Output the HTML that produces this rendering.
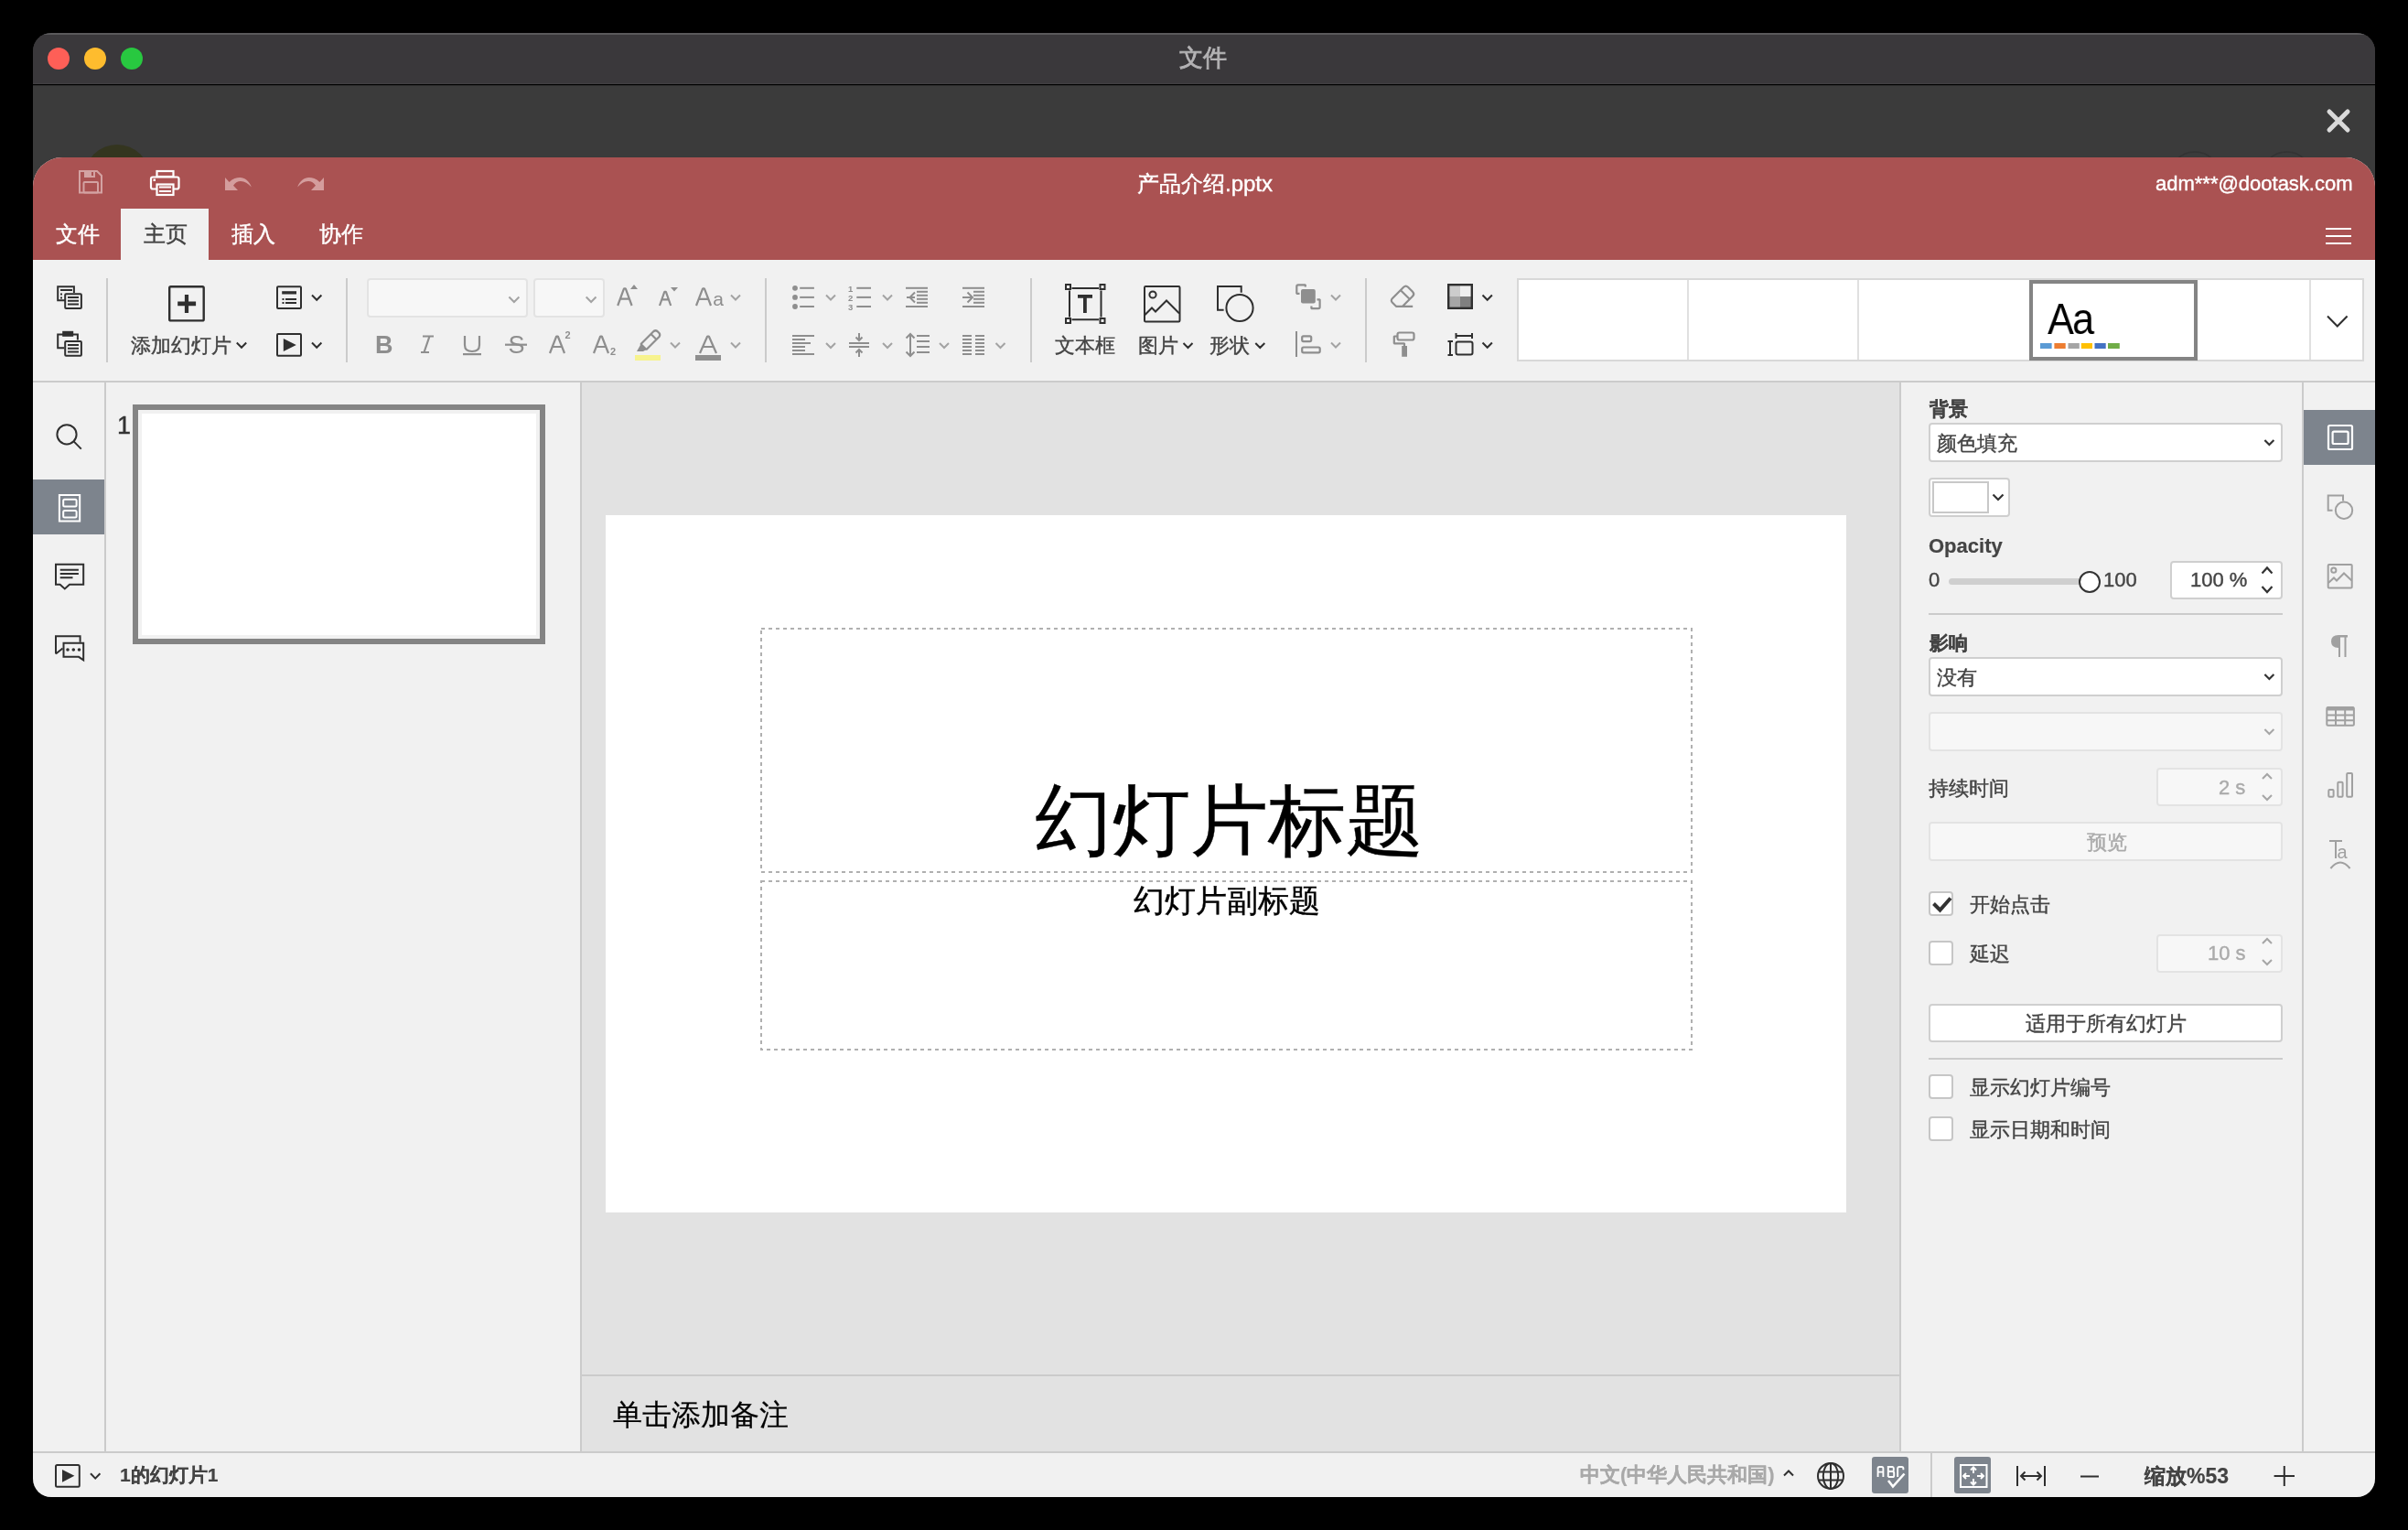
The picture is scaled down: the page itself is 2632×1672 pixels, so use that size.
<!DOCTYPE html>
<html><head><meta charset="utf-8">
<style>
*{box-sizing:border-box;margin:0;padding:0}
html,body{width:2632px;height:1672px;overflow:hidden;background:#000}
body{position:relative;font-family:"Liberation Sans",sans-serif;color:#444}
.a{position:absolute}
.t{position:absolute;line-height:1;white-space:nowrap;-webkit-text-stroke:0.4px;will-change:transform}
#win{position:absolute;left:0;top:0;width:2632px;height:1672px;clip-path:inset(36px 36px 36px 36px round 20px);background:#3b3b3b}
.cb{position:absolute;background:#fff;border:2px solid #cfcfcf;border-radius:4px}
.dis{background:#f7f7f7;border-color:#e3e3e3}
.chk{position:absolute;width:27px;height:27px;background:#fff;border:2px solid #c6c6c6;border-radius:4px}
</style></head><body>
<div id="win">
  <!-- mac title bar -->
  <div class="a" style="left:36px;top:36px;width:2560px;height:56px;background:#3a383b;border-top:2px solid #5a595b"></div>
  <div class="a" style="left:36px;top:91px;width:2560px;height:1px;background:#424043"></div><div class="a" style="left:36px;top:92px;width:2560px;height:1px;background:#000"></div><div class="a" style="left:36px;top:93px;width:2560px;height:1px;background:#2e2e2e"></div>
  <div class="a" style="left:52px;top:52px;width:24px;height:24px;border-radius:50%;background:#fe5f57"></div>
  <div class="a" style="left:92px;top:52px;width:24px;height:24px;border-radius:50%;background:#febc2e"></div>
  <div class="a" style="left:132px;top:52px;width:24px;height:24px;border-radius:50%;background:#28c840"></div>
  <div class="t" style="left:1289px;top:50px;font-size:26px;color:#b4b3b5;-webkit-text-stroke:0.9px">文件</div>
  <!-- dark strip -->
  <div class="a" style="left:92px;top:158px;width:72px;height:72px;border-radius:50%;background:#34351f"></div>

  <svg class="a" style="left:0;top:0" width="2632" height="1672"><g fill="none" stroke="#333" stroke-width="1.5"><circle cx="2399" cy="194" r="28"/><circle cx="2499.5" cy="194" r="28"/></g></svg>
  <!-- app -->
  <div class="a" style="left:36px;top:172px;width:2560px;height:1464px;background:#f1f1f1;border-radius:32px 32px 0 0;overflow:hidden">
    <div class="a" style="left:0;top:0;width:2560px;height:112px;background:#aa5252"></div>
  </div>
  <!-- tabs -->
  <div class="a" style="left:132px;top:228px;width:96px;height:56px;background:#f1f1f1"></div>
  <div class="t" style="left:61px;top:244px;font-size:24px;color:#fff">文件</div>
  <div class="t" style="left:157px;top:244px;font-size:24px;color:#444">主页</div>
  <div class="t" style="left:253px;top:244px;font-size:24px;color:#fff">插入</div>
  <div class="t" style="left:349px;top:244px;font-size:24px;color:#fff">协作</div>
  <div class="t" style="left:1243px;top:189px;font-size:24px;color:#fff">产品介绍.pptx</div>
  <div class="t" style="left:2356px;top:190px;font-size:22px;color:#fff">adm***@dootask.com</div>

  <!-- toolbar border -->
  <div class="a" style="left:36px;top:416px;width:2560px;height:2px;background:#cbcbcb"></div>
  <!-- separators -->
  <div class="a" style="left:116px;top:304px;width:2px;height:92px;background:#cbcbcb"></div>
  <div class="a" style="left:378px;top:304px;width:2px;height:92px;background:#cbcbcb"></div>
  <div class="a" style="left:836px;top:304px;width:2px;height:92px;background:#cbcbcb"></div>
  <div class="a" style="left:1126px;top:304px;width:2px;height:92px;background:#cbcbcb"></div>
  <div class="a" style="left:1492px;top:304px;width:2px;height:92px;background:#cbcbcb"></div>
  <!-- combos -->
  <div class="cb dis" style="left:401px;top:304px;width:176px;height:43px"></div>
  <div class="cb dis" style="left:583px;top:304px;width:78px;height:43px"></div>
  <!-- labels -->
  <div class="t" style="left:143px;top:367px;font-size:22px">添加幻灯片</div>
  <div class="t" style="left:1153px;top:367px;font-size:22px">文本框</div>
  <div class="t" style="left:1244px;top:367px;font-size:22px">图片</div>
  <div class="t" style="left:1322px;top:367px;font-size:22px">形状</div>
  <!-- theme gallery -->
  <div class="a" style="left:1658px;top:304px;width:926px;height:91px;background:#fff;border:2px solid #d8d8d8"></div>
  <div class="a" style="left:1844px;top:306px;width:2px;height:87px;background:#e0e0e0"></div>
  <div class="a" style="left:2030px;top:306px;width:2px;height:87px;background:#e0e0e0"></div>
  <div class="a" style="left:2524px;top:306px;width:2px;height:87px;background:#e0e0e0"></div>
  <div class="a" style="left:2218px;top:306px;width:184px;height:88px;border:4px solid #848484;background:#fff"></div>
  <div class="t" style="left:2238px;top:325px;font-size:48px;color:#000;letter-spacing:-2px;-webkit-text-stroke:0;transform:scaleX(0.9);transform-origin:0 0">Aa</div>

  <!-- left sidebar -->
  <div class="a" style="left:114px;top:418px;width:2px;height:1170px;background:#cbcbcb"></div>
  <div class="a" style="left:36px;top:524px;width:78px;height:60px;background:#7d848d"></div>
  <!-- thumbnails panel -->
  <div class="a" style="left:634px;top:418px;width:2px;height:1170px;background:#cbcbcb"></div>
  <div class="t" style="left:128px;top:452px;font-size:27px;color:#333">1</div>
  <div class="a" style="left:145px;top:442px;width:451px;height:262px;border:6px solid #848484;background:#f1f1f1;padding:4px"><div style="width:100%;height:100%;background:#fff"></div></div>
  <!-- canvas -->
  <div class="a" style="left:636px;top:418px;width:1440px;height:1085px;background:#e2e2e2"></div>
  <div class="a" style="left:662px;top:563px;width:1356px;height:762px;background:#fff"></div>
  <svg class="a" style="left:0;top:0" width="2632" height="1672"><g fill="none" stroke="#b0b0b0" stroke-width="2" stroke-dasharray="4 4"><rect x="832" y="687" width="1017" height="266"/><rect x="832" y="963" width="1017" height="184"/></g></svg>
  
  <div class="t" style="left:1131px;top:854px;font-size:85px;color:#000">幻灯片标题</div>
  <div class="t" style="left:1239px;top:967px;font-size:34px;color:#000">幻灯片副标题</div>
  <!-- notes -->
  <div class="a" style="left:636px;top:1502px;width:1440px;height:2px;background:#cbcbcb"></div>
  <div class="a" style="left:636px;top:1504px;width:1440px;height:84px;background:#e2e2e2"></div>
  <div class="t" style="left:670px;top:1530px;font-size:32px;color:#000;-webkit-text-stroke:0.2px">单击添加备注</div>
  <!-- right panel -->
  <div class="a" style="left:2076px;top:418px;width:2px;height:1170px;background:#cbcbcb"></div>
  <div class="a" style="left:2516px;top:418px;width:2px;height:1170px;background:#cbcbcb"></div>
  <div class="a" style="left:2518px;top:448px;width:78px;height:60px;background:#7d848d"></div>

  <!-- status bar -->
  <div class="a" style="left:36px;top:1586px;width:2560px;height:2px;background:#cbcbcb"></div>

  <!-- right panel widgets -->
  <div class="t" style="left:2109px;top:436px;font-size:21px;font-weight:bold;color:#444;-webkit-text-stroke:0.25px">背景</div>
  <div class="cb" style="left:2108px;top:462px;width:387px;height:43px"></div>
  <div class="t" style="left:2117px;top:474px;font-size:22px;color:#444">颜色填充</div>
  <div class="cb" style="left:2108px;top:522px;width:89px;height:43px"></div>
  <div class="a" style="left:2112px;top:526px;width:62px;height:35px;border:2px solid #c8c8c8;background:#fff"></div>
  <div class="t" style="left:2108px;top:586px;font-size:22px;font-weight:bold;color:#444;-webkit-text-stroke:0.2px">Opacity</div>
  <div class="t" style="left:2108px;top:623px;font-size:22px;color:#444">0</div>
  <div class="a" style="left:2130px;top:632px;width:154px;height:7px;border-radius:4px;background:#cfcfcf"></div>
  <div class="a" style="left:2272px;top:624px;width:24px;height:24px;border-radius:50%;background:#fff;border:2px solid #333"></div>
  <div class="t" style="left:2299px;top:623px;font-size:22px;color:#444">100</div>
  <div class="cb" style="left:2372px;top:613px;width:123px;height:42px"></div>
  <div class="t" style="left:2394px;top:623px;font-size:22px;color:#444">100 %</div>
  <div class="a" style="left:2108px;top:670px;width:387px;height:2px;background:#cbcbcb"></div>
  <div class="t" style="left:2109px;top:692px;font-size:21px;font-weight:bold;color:#444;-webkit-text-stroke:0.25px">影响</div>
  <div class="cb" style="left:2108px;top:718px;width:387px;height:43px"></div>
  <div class="t" style="left:2117px;top:730px;font-size:22px;color:#444">没有</div>
  <div class="cb dis" style="left:2108px;top:778px;width:387px;height:43px"></div>
  <div class="t" style="left:2108px;top:851px;font-size:22px;color:#444">持续时间</div>
  <div class="cb dis" style="left:2357px;top:839px;width:138px;height:42px"></div>
  <div class="t" style="left:2425px;top:850px;font-size:22px;color:#aaa">2 s</div>
  <div class="cb dis" style="left:2108px;top:898px;width:387px;height:43px"></div>
  <div class="t" style="left:2281px;top:910px;font-size:22px;color:#aaa">预览</div>
  <div class="chk" style="left:2108px;top:974px"></div>
  <div class="t" style="left:2153px;top:978px;font-size:22px;color:#444">开始点击</div>
  <div class="chk" style="left:2108px;top:1028px"></div>
  <div class="t" style="left:2153px;top:1032px;font-size:22px;color:#444">延迟</div>
  <div class="cb dis" style="left:2357px;top:1021px;width:138px;height:42px"></div>
  <div class="t" style="left:2413px;top:1031px;font-size:22px;color:#aaa">10 s</div>
  <div class="cb" style="left:2108px;top:1097px;width:387px;height:42px"></div>
  <div class="t" style="left:2214px;top:1108px;font-size:22px;color:#444">适用于所有幻灯片</div>
  <div class="a" style="left:2108px;top:1156px;width:387px;height:2px;background:#cbcbcb"></div>
  <div class="chk" style="left:2108px;top:1174px"></div>
  <div class="t" style="left:2153px;top:1178px;font-size:22px;color:#444">显示幻灯片编号</div>
  <div class="chk" style="left:2108px;top:1220px"></div>
  <div class="t" style="left:2153px;top:1224px;font-size:22px;color:#444">显示日期和时间</div>
  <!-- status texts -->
  <div class="t" style="left:131px;top:1601px;font-size:21px;font-weight:bold;color:#444;-webkit-text-stroke:0.2px">1的幻灯片1</div>
  <div class="t" style="left:1727px;top:1601px;font-size:22px;font-weight:bold;color:#a9a9a9;-webkit-text-stroke:0.2px">中文(中华人民共和国)</div>
  <div class="a" style="left:2110px;top:1588px;width:2px;height:48px;background:#cbcbcb"></div>
  <div class="t" style="left:2344px;top:1602px;font-size:23px;font-weight:bold;color:#444;-webkit-text-stroke:0.2px">缩放%53</div>
  <svg class="a" style="left:0;top:0" width="2632" height="1672" viewBox="0 0 2632 1672" fill="none" stroke-linecap="butt">
<!-- close X -->
<path d="M2546,122 L2566,142 M2566,122 L2546,142" stroke="#dadada" stroke-width="5" stroke-linecap="round"/>
<!-- header: save -->
<g stroke="#d3a2a2" stroke-width="2" fill="none">
<path d="M87,187 H106 L111,192 V210.5 H87 Z"/>
<rect x="91.5" y="199" width="15.5" height="11.5" rx="1"/>
</g>
<rect x="92" y="187" width="12" height="7" fill="#d3a2a2"/>
<rect x="100" y="188" width="2" height="4" fill="#aa5252"/>
<!-- print -->
<g stroke="#fff" stroke-width="2.2" fill="none">
<rect x="171.5" y="187" width="18" height="6"/>
<rect x="165" y="193.5" width="30.5" height="13" rx="2"/>
<rect x="171.5" y="201.5" width="18" height="11.5" fill="#aa5252"/>
<path d="M174,204.5 H187 M174,209 H187"/>
</g>
<rect x="167.5" y="195.5" width="2.5" height="2.5" fill="#fff"/>
<!-- undo redo -->
<path d="M246,194 L250.6,198.9 C254.5,195.3 258.5,194 262.3,194 C267.5,194 272.5,198 274.8,204.4 C271,200.5 267.5,198.1 263,198.1 C260,198.1 257.5,199.5 255,202.7 L260,208 H246 Z" fill="#d49d9d"/>
<path d="M 354 194 L 349.4 198.9 C 345.5 195.3 341.5 194 337.7 194 C 332.5 194 327.5 198 325.2 204.4 C 329 200.5 332.5 198.1 337 198.1 C 340 198.1 342.5 199.5 345 202.7 L 340 208 H 354 Z" fill="#d49d9d"/>
<!-- hamburger -->
<path d="M2542,250 H2570 M2542,258 H2570 M2542,266 H2570" stroke="#fff" stroke-width="2"/>

<!-- ===== toolbar dark icons ===== -->
<g stroke="#2f2f2f" stroke-width="2" fill="none">
<!-- copy -->
<path d="M71,328.2 H63.2 V313.2 H80.9 V320"/>
<rect x="71.2" y="321.2" width="17.7" height="15.7" rx="1"/>
<path d="M66,317 H79 M74,325 H86 M74,328.8 H86 M74,332.6 H86"/>
<!-- paste -->
<path d="M70.2,380.3 H63.2 V365.5 H84.9 V371.5"/>
<rect x="71.2" y="373" width="17.7" height="15.7" rx="1"/>
<path d="M74,377 H86 M74,380.8 H86 M74,384.6 H86"/>
<!-- add slide -->
<rect x="185.2" y="313.2" width="37.5" height="37.2" rx="1.5" stroke-width="2.4"/>
<!-- layout -->
<rect x="303" y="313.2" width="26" height="23.7" rx="1"/>
<path d="M312,327 H324 M312,331 H324"/>
<!-- play -->
<rect x="303" y="365" width="26" height="23.7" rx="1"/>
<!-- chevrons -->
<path d="M341,322.5 L346.2,327.8 L351.4,322.5 M341,374.5 L346.2,379.8 L351.4,374.5 M258.8,374.5 L264,379.8 L269.2,374.5"/>
<!-- textbox -->
<path d="M1169,317.5 V346.5 M1203.5,317.5 V346.5 M1171.5,315 H1201 M1171.5,349.2 H1201"/>
<rect x="1165" y="311" width="5" height="5"/><rect x="1202.5" y="311" width="5" height="5"/>
<rect x="1165" y="348" width="5" height="5"/><rect x="1202.5" y="348" width="5" height="5"/>
<!-- image -->
<rect x="1251" y="313" width="38.5" height="38.5" rx="1.2"/>
<circle cx="1260" cy="322" r="3.6"/>
<path d="M1251.5,344 L1259,336.5 L1263,340.5 L1275,328.5 L1289,342.5"/>
<!-- shape -->
<path d="M1337.6,338.8 H1331 V313 H1356.7 V319.7"/>
<circle cx="1355" cy="336.5" r="14.6"/>
<!-- chevrons pic, shape -->
<path d="M1293.5,375 L1298.5,380 L1303.5,375 M1372.3,375 L1377.3,380 L1382.3,375"/>
<!-- color scheme / slide size chevrons -->
<path d="M1620.5,322.5 L1625.7,327.8 L1630.9,322.5 M1620.5,374.5 L1625.7,379.8 L1630.9,374.5"/>
<!-- slide size -->
<rect x="1591.5" y="373.5" width="18" height="14" rx="2"/>
<path d="M1591.5,367 H1609 M1591.5,364 V370 M1609,364 V370 M1585,373 V388 M1582.5,373 H1588 M1582.5,388 H1588"/>
<!-- gallery chevron -->
<path d="M2544,345.5 L2554.8,356.5 L2565.6,345.5"/>
</g>
<path d="M194.2,329.5 H214.1 V334.2 H194.2 Z M201.9,322 H206.1 V341.9 H201.9 Z" fill="#2f2f2f"/>
<rect x="68.2" y="361.8" width="12" height="6" fill="#2f2f2f"/>
<rect x="66" y="320.5" width="2" height="2" fill="#2f2f2f"/><rect x="66" y="324.5" width="2" height="2" fill="#2f2f2f"/>
<rect x="308.2" y="318.2" width="15.8" height="3.3" fill="#2f2f2f"/>
<rect x="308.5" y="326" width="2" height="2" fill="#2f2f2f"/><rect x="308.5" y="330" width="2" height="2" fill="#2f2f2f"/>
<path d="M309.8,370 L323.8,377 L309.8,384 Z" fill="#2f2f2f"/>
<path d="M1178,322 H1194 V325.8 H1187.8 V342 H1184 V325.8 H1178 Z" fill="#2f2f2f"/>
<!-- color scheme -->
<rect x="1584" y="312" width="12" height="12" fill="#cccccc"/>
<rect x="1596" y="312" width="12" height="12" fill="#f0f0f0"/>
<rect x="1584" y="324" width="12" height="12" fill="#a6a6a6"/>
<rect x="1596" y="324" width="12" height="12" fill="#808080"/>
<rect x="1583.2" y="311.2" width="25.6" height="25.6" stroke="#2f2f2f" stroke-width="2.4" fill="none"/>
<!-- theme color bars -->
<rect x="2230" y="375" width="12.6" height="6" fill="#5b9bd5"/>
<rect x="2245.4" y="375" width="12.3" height="6" fill="#ed7d31"/>
<rect x="2260.5" y="375" width="12.3" height="6" fill="#a5a5a5"/>
<rect x="2274.8" y="375" width="12.2" height="6" fill="#ffc000"/>
<rect x="2289.5" y="375" width="12.2" height="6" fill="#4472c4"/>
<rect x="2304" y="375" width="12.8" height="6" fill="#70ad47"/>
</svg>
<svg class="a" style="left:0;top:0" width="2632" height="1672" viewBox="0 0 2632 1672" fill="none">
<g stroke="#a3a3a3" stroke-width="2" fill="none">
<!-- combo chevrons -->
<path d="M556.4,324.5 L561.9,330 L567.4,324.5 M640.7,324.5 L646.1,330 L651.5,324.5"/>
<!-- font chevrons -->
<path d="M799,322.5 L804,327.5 L809,322.5 M733,374.5 L738,379.5 L743,374.5 M799,374.5 L804,379.5 L809,374.5"/>
<!-- para chevrons -->
<path d="M903,322.5 L908,327.5 L913,322.5 M965,322.5 L970,327.5 L975,322.5 M903,375 L908,380 L913,375 M965,375 L970,380 L975,375 M1027,375 L1032,380 L1037,375 M1088.5,375 L1093.5,380 L1098.5,375"/>
<!-- arrange chevrons -->
<path d="M1455,322.5 L1460,327.5 L1465,322.5 M1455,374.5 L1460,379.5 L1465,374.5"/>
</g>
<g stroke="#8e8e8e" stroke-width="2.2" fill="none" stroke-linejoin="bevel">
<!-- A up -->
<path d="M675.2,334 L682,315.3 H683.8 L690.6,334 M678.6,326.6 H687.2"/>
<!-- A down small -->
<path d="M721,334 L726.3,318.8 H727.9 L733.2,334 M723.6,327.4 H730.6"/>
<!-- Aa -->
<path d="M761,334 L768.1,315.3 H769.9 L777,334 M764.2,326.8 H773.8"/>
<!-- I -->
<path d="M462,367.5 H474 M460,385 H469 M469.5,367.5 L463.5,385"/>
<!-- U -->
<path d="M508,367 V377 Q508,384 516,384 Q524,384 524,377 V367"/>
<!-- S strike -->
<path d="M552,376.7 H576"/>
<!-- A^2 -->
<path d="M601,386 L608.2,367.5 H609.8 L617,386 M604,379 H614"/>
<!-- A_2 -->
<path d="M649,386 L656.2,367.5 H657.8 L665,386 M652,379 H662"/>
<!-- highlight pencil -->
<path d="M700.5,376 L714.5,362 Q716.5,360.5 718.5,362 L720.5,364 Q722,366 720.5,368 L706.5,382 Z M711.5,365 L717.5,371"/>
<!-- font color A -->
<path d="M765,386 L773.2,367.5 H774.8 L783,386 M768.5,379 H779.5"/>
<!-- eraser -->
<path d="M1533,334.8 L1544,323.8 Q1546.5,321.3 1544,318.8 L1539,313.8 Q1536.6,311.4 1534.2,313.8 L1522,326 Q1519.6,328.4 1522,330.8 L1526,334.8 H1544.2 M1531.2,317.5 L1540.4,326.5" stroke-linejoin="round"/>
<!-- format painter -->
<rect x="1527.5" y="363.5" width="18" height="8" rx="2"/>
<path d="M1527.5,367.5 H1523.8 V375.3 H1535 V378.5"/>
<!-- align shapes -->
<rect x="1423.2" y="367.3" width="10" height="5.8" rx="1.5"/>
<rect x="1423.2" y="379.5" width="19.5" height="5.8" rx="1.5"/>
<!-- arrange brackets -->
<path d="M1420.5,320.8 H1417.3 V313 Q1417.3,311.3 1419,311.3 H1426.8 V313.5 M1439.5,327.3 H1442.6 V335.5 Q1442.6,337.2 1441,337.2 H1433.4 V334.5"/>
</g>
<g fill="#8e8e8e">
<!-- A up/down triangles -->
<path d="M689,316 L693,311 L697,316 Z"/>
<path d="M733,314 L741,314 L737,318.5 Z"/>
<!-- Aa 'a' -->
<text x="779.3" y="334" font-family="Liberation Sans" font-size="21" fill="#8e8e8e">a</text>
<!-- B -->
<text x="410" y="386" font-family="Liberation Sans" font-weight="bold" font-size="27" fill="#8e8e8e">B</text>
<rect x="506" y="386" width="20" height="2.2"/>
<text x="555.5" y="386" font-family="Liberation Sans" font-size="27" fill="#8e8e8e">S</text>
<text x="617.5" y="370" font-family="Liberation Sans" font-weight="bold" font-size="11" fill="#8e8e8e">2</text>
<text x="667" y="388" font-family="Liberation Sans" font-weight="bold" font-size="11" fill="#8e8e8e">2</text>
<path d="M700.5,376 L706.5,382 L703,384 L696,384 Z"/>
<rect x="760" y="388" width="28" height="6" fill="#8f8f8f"/>
<rect x="694" y="388" width="28" height="6" fill="#f7f38e"/>
<!-- bullets -->
<circle cx="869" cy="314.8" r="2.9"/><circle cx="869" cy="324.9" r="2.9"/><circle cx="869" cy="335" r="2.9"/>
<rect x="874.2" y="313.8" width="15.7" height="2"/><rect x="874.2" y="323.9" width="15.7" height="2"/><rect x="874.2" y="334" width="15.7" height="2"/>
<!-- numbering -->
<text x="927" y="319.3" font-family="Liberation Sans" font-weight="bold" font-size="9.5">1</text>
<text x="927" y="329.3" font-family="Liberation Sans" font-weight="bold" font-size="9.5">2</text>
<text x="927" y="339.3" font-family="Liberation Sans" font-weight="bold" font-size="9.5">3</text>
<rect x="936.3" y="313.8" width="15.7" height="2"/><rect x="936.3" y="323.9" width="15.7" height="2"/><rect x="936.3" y="334" width="15.7" height="2"/>
<!-- decrease indent -->
<rect x="990" y="313.8" width="24" height="2"/><rect x="990" y="334" width="24" height="2"/>
<rect x="1002" y="317.8" width="12" height="2"/><rect x="1002" y="321.8" width="12" height="2"/><rect x="1002" y="325.8" width="12" height="2"/><rect x="1002" y="329.8" width="12" height="2"/>
<!-- increase indent -->
<rect x="1052" y="313.8" width="24" height="2"/><rect x="1052" y="334" width="24" height="2"/>
<rect x="1064" y="317.8" width="12" height="2"/><rect x="1064" y="321.8" width="12" height="2"/><rect x="1064" y="325.8" width="12" height="2"/><rect x="1064" y="329.8" width="12" height="2"/>
<!-- align left -->
<rect x="866" y="366" width="24" height="2"/><rect x="866" y="370" width="14" height="2"/><rect x="866" y="374" width="20" height="2"/><rect x="866" y="378" width="14" height="2"/><rect x="866" y="382" width="14" height="2"/><rect x="866" y="386" width="24" height="2"/>
<!-- vertical align -->
<rect x="928" y="374" width="22" height="2"/><rect x="928" y="378" width="22" height="2"/>
<!-- line spacing -->
<rect x="1002" y="366" width="14" height="2"/><rect x="1002" y="372" width="14" height="2"/><rect x="1002" y="378" width="14" height="2"/><rect x="1002" y="384" width="14" height="2"/>
<!-- columns -->
<rect x="1052" y="366" width="10" height="2"/><rect x="1052" y="370" width="10" height="2"/><rect x="1052" y="374" width="10" height="2"/><rect x="1052" y="378" width="10" height="2"/><rect x="1052" y="382" width="10" height="2"/><rect x="1052" y="386" width="10" height="2"/>
<rect x="1066" y="366" width="10" height="2"/><rect x="1066" y="370" width="10" height="2"/><rect x="1066" y="374" width="10" height="2"/><rect x="1066" y="378" width="10" height="2"/><rect x="1066" y="382" width="10" height="2"/><rect x="1066" y="386" width="10" height="2"/>
<!-- arrange filled -->
<rect x="1422" y="316" width="15.8" height="15.5" rx="2"/>
<!-- align bar -->
<rect x="1416" y="362" width="2" height="28"/>
<!-- painter handle -->
<rect x="1532.2" y="378" width="5.8" height="11.8"/>
</g>
<g stroke="#8e8e8e" stroke-width="2" fill="none">
<path d="M1000,319.5 L994.5,325 L1000,330.5 M991,325 H1000"/>
<path d="M1057.5,319.5 L1063,325 L1057.5,330.5 M1052,325 H1062"/>
<path d="M939,364 V372 M935.5,368.5 L939,372 L942.5,368.5 M939,390 V382 M935.5,385.5 L939,382 L942.5,385.5"/>
<path d="M995,365 V389 M990.5,369.5 L995,365 L999.5,369.5 M990.5,384.5 L995,389 L999.5,384.5"/>
</g>
</svg>
<svg class="a" style="left:0;top:0" width="2632" height="1672" viewBox="0 0 2632 1672" fill="none">
<!-- left sidebar -->
<g stroke="#2f2f2f" stroke-width="2" fill="none">
<circle cx="73" cy="474.8" r="10.6"/>
<path d="M80.6,482.4 L88.8,490.6"/>
<path d="M61,616.8 H91.2 V638.7 H76 L70.8,643.5 L65.6,638.7 H61 Z"/>
<path d="M65.7,622.8 H85.9 M65.7,627 H85.9 M65.7,631.3 H79.5"/>
<path d="M61,714.5 V695.2 H87.6 V701.8 M61,714.5 L68.5,708.5"/>
<path d="M69.5,702.8 H91.2 V721.3 L86,717.8 H69.5 Z"/>
</g>
<g fill="#2f2f2f"><circle cx="74" cy="710" r="1.8"/><circle cx="80.3" cy="710" r="1.8"/><circle cx="86.5" cy="710" r="1.8"/></g>
<g stroke="#fff" stroke-width="2" fill="none">
<rect x="64.9" y="541" width="22.3" height="28.5"/>
<rect x="69.2" y="545.8" width="14.4" height="7.6" rx="1.5"/>
<rect x="69.2" y="558" width="14.4" height="7.6" rx="1.5"/>
<!-- right active tab -->
<rect x="2545" y="465" width="26" height="26" rx="1.5" stroke-width="2.2"/>
<rect x="2549.6" y="471.6" width="17" height="13.4" rx="1.5" stroke-width="2.2"/>
</g>
<!-- right tabs gray -->
<g stroke="#a0a0a0" stroke-width="2" fill="none">
<path d="M2549.5,557.7 H2544.7 V541.5 H2561 V547.5"/>
<circle cx="2562" cy="557.7" r="9.2"/>
<rect x="2544.7" y="617" width="26" height="25.6" rx="1"/>
<circle cx="2550.8" cy="623.2" r="2.6"/>
<path d="M2545,637 L2551,631.5 L2554,634.5 L2562,626.5 L2570.5,634.5"/>
<rect x="2543.3" y="773" width="29.6" height="19.8" rx="1.5"/>
<path d="M2543.3,781.5 H2573 M2543.3,787.3 H2573 M2553,776 V792.8 M2563.2,776 V792.8"/>
<rect x="2545.3" y="863" width="5.3" height="7.7" rx="1"/>
<rect x="2555.3" y="854.8" width="5.3" height="15.9" rx="1"/>
<rect x="2565.2" y="845" width="5.8" height="25.7" rx="1"/>
<path d="M2557,696 V718 M2563.5,696 V718 M2546,919 H2560 M2553,919 V938"/>
<path d="M2547.4,949 Q2558,936 2568.6,949"/>
</g>
<g fill="#a0a0a0">
<rect x="2543.3" y="772" width="29.6" height="4.5" rx="1.5"/>
<path d="M2556,694 H2566 V696.5 H2556 Z M2556,694 Q2548,694 2548,701 Q2548,708 2556,708 Z"/>
<text x="2554.5" y="938" font-family="Liberation Sans" font-size="20" fill="#a0a0a0">a</text>
</g>
<!-- status bar -->
<g stroke="#2f2f2f" stroke-width="2" fill="none">
<rect x="61" y="1601" width="25.8" height="23.8" rx="1.5"/>
<path d="M99,1610.3 L104.2,1615.6 L109.4,1610.3"/>
<path d="M1950,1612.5 L1955,1607.5 L1960,1612.5"/>
<circle cx="2001" cy="1612.9" r="14"/>
<ellipse cx="2001" cy="1612.9" rx="8.2" ry="14"/>
<path d="M2001,1599 V1627 M1988,1608.4 H2014 M1988,1617.4 H2014"/>
<path d="M2205,1602 V1624 M2235,1602 V1624 M2209,1613 H2231 M2213.5,1608.5 L2209,1613 L2213.5,1617.5 M2226.5,1608.5 L2231,1613 L2226.5,1617.5"/>
<path d="M2274,1613.5 H2294 M2485.6,1613 H2508 M2496.8,1602 V1624"/>
</g>
<path d="M68,1606 L81.4,1612.8 L68,1619.7 Z" fill="#2f2f2f"/>
<rect x="2046" y="1592" width="40" height="40" rx="3" fill="#7d848d"/>
<rect x="2136" y="1592" width="40" height="40" rx="3" fill="#7d848d"/>
<g stroke="#fff" stroke-width="2" fill="none">
<rect x="2143" y="1601" width="28.5" height="24"/>
<path d="M2157,1603.5 V1610 M2154,1606.5 L2157,1603.5 L2160,1606.5 M2157,1616 V1622.5 M2154,1619.5 L2157,1622.5 L2160,1619.5 M2146,1613 H2153 M2149,1610 L2146,1613 L2149,1616 M2161,1613 H2168 M2165,1610 L2168,1613 L2165,1616"/>
<path d="M2064,1618 L2069,1624.5 L2081.5,1610.5" stroke-width="2.6"/>
</g>
<g stroke="#fff" stroke-width="1.9" fill="none">
<path d="M2052.6,1614 V1604.6 Q2052.6,1603 2054.2,1603 H2056.8 Q2058.4,1603 2058.4,1604.6 V1614 M2052.6,1608.6 H2058.4"/>
<path d="M2063.8,1614 V1603 H2068.4 Q2069.8,1603 2069.8,1604.6 V1606.4 Q2069.8,1608 2068.4,1608 H2063.8 M2068.4,1608 Q2070.2,1608 2070.2,1609.8 V1612.4 Q2070.2,1614 2068.6,1614 H2063.8"/>
<path d="M2074.2,1614 V1604.8 Q2074.2,1603 2076,1603 H2078.6 Q2080.4,1603 2080.4,1604.8 V1606.2"/>
</g>
</svg>
<svg class="a" style="left:0;top:0" width="2632" height="1672" viewBox="0 0 2632 1672" fill="none">
<g stroke="#333" stroke-width="2.2" fill="none">
<path d="M2475.4,481 L2480.4,486 L2485.4,481 M2475.4,737 L2480.4,742 L2485.4,737 M2178.5,540.5 L2184,546 L2189.5,540.5"/>
<path d="M2472.5,626.5 L2478,620.5 L2483.5,626.5 M2472.5,641 L2478,647 L2483.5,641"/>
</g>
<g stroke="#a6a6a6" stroke-width="2" fill="none">
<path d="M2475.4,797 L2480.4,802 L2485.4,797"/>
<path d="M2473,851 L2478,846 L2483,851 M2473,869 L2478,874 L2483,869"/>
<path d="M2473,1031 L2478,1026 L2483,1031 M2473,1049 L2478,1054 L2483,1049"/>
</g>
<path d="M2113.5,987.5 L2120.5,994.5 L2132,981.5" stroke="#333" stroke-width="4" fill="none"/>
</svg>

</div>
</body></html>
